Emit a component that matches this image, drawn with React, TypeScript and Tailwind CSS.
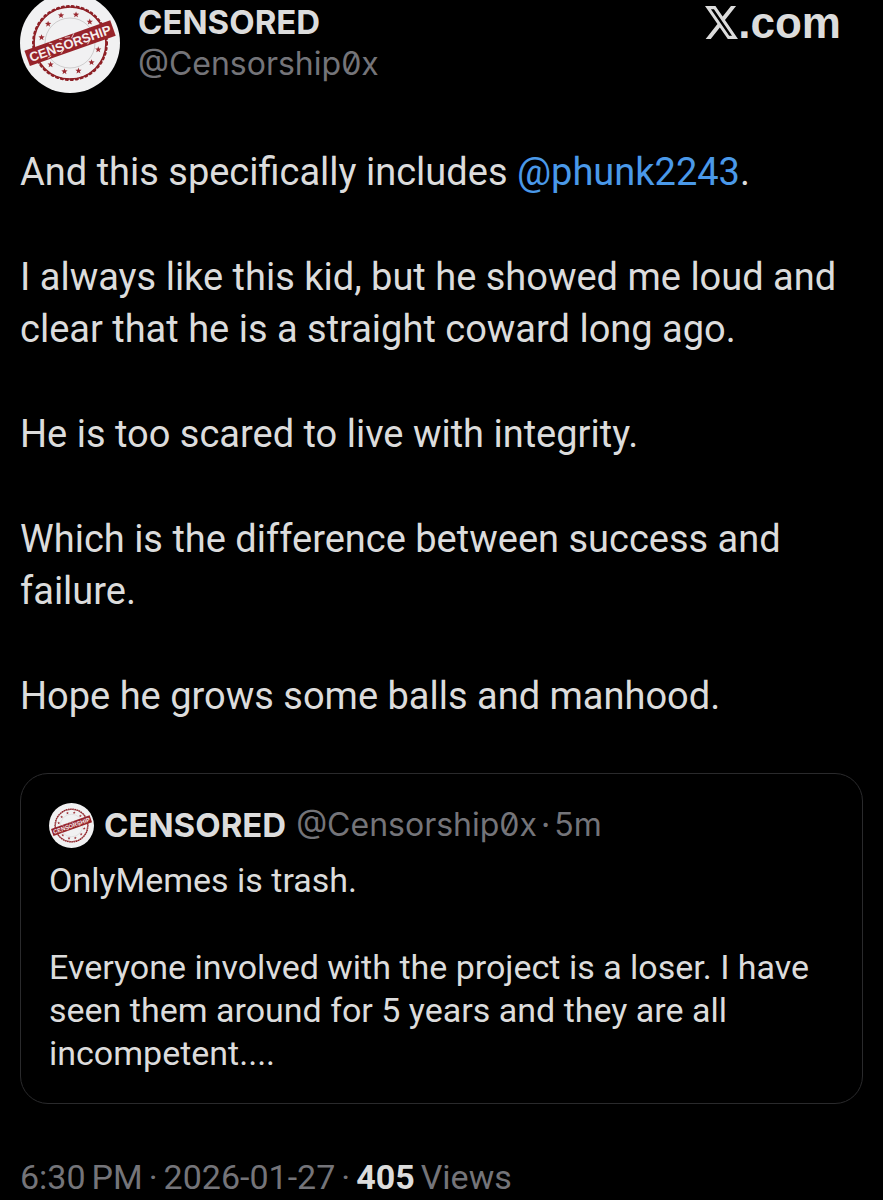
const STAR = "M0 -3.2L0.8 -1.1L3.1 -1L1.3 0.5L2 2.7L0 1.4L-2 2.7L-1.3 0.5L-3.1 -1L-0.8 -1.1Z";
const STAR_ANGLES = [13, 42, 73, 101, 132, 191, 221, 252, 282, 313];

function Avatar({ className }: { className: string }) {
  return (
    <svg viewBox="0 0 100 100" className={className} role="img" aria-label="Censorship stamp">
      <circle cx="50" cy="50" r="50" fill="#f1f1f2" />
      <circle cx="50" cy="50" r="36" fill="none" stroke="#8e2026" strokeWidth="1.6" />
      <circle cx="50" cy="50" r="36.8" fill="none" stroke="#8e2026" strokeWidth="2.4" strokeLinecap="round" strokeDasharray="1.8 3.2" />
      <circle cx="50" cy="50" r="25" fill="none" stroke="#b5b3b4" strokeWidth="0.6" />
      {STAR_ANGLES.map((a) => (
        <path key={a} d={STAR} fill="#9a2a30" transform={`rotate(${a} 50 50) translate(79 50) rotate(${-a})`} />
      ))}
      <g transform="rotate(-19.5 50 50)">
        <rect x="4.5" y="42" width="91" height="16.4" fill="#97232a" />
        <text
          x="50"
          y="55"
          textAnchor="middle"
          fontSize="13"
          fontWeight="700"
          fill="#f6eeee"
          fontFamily="Liberation Sans, sans-serif"
        >
          CENSORSHIP
        </text>
        <path d="M30 43l3 2M38 57l4-3M47 43l5 1M57 42l-4 4M66 57l3-2M24 57l4-1M41 43l3 1" stroke="#eadcdc" strokeWidth="0.8" />
      </g>
    </svg>
  );
}

function XLogo() {
  return (
    <svg viewBox="1.254 2.25 21.573 19.5" preserveAspectRatio="none" className="h-[33px] w-[33px]" fill="currentColor" aria-hidden="true">
      <path d="M18.244 2.25h3.308l-7.227 8.26 8.502 11.24H16.17l-5.214-6.817L4.99 21.75H1.68l7.73-8.835L1.254 2.25H8.08l4.713 6.231zm-1.161 17.52h1.833L7.084 4.126H5.117z" />
    </svg>
  );
}

export default function App() {
  return (
    <main className="min-h-screen bg-black px-5 font-['Roboto',sans-serif] text-[#dcdcdc]">
      <article>
        <header className="flex items-start">
          <Avatar className="-mt-[7px] size-[100px] shrink-0" />
          <div className="ml-[18px] flex-1 pt-0.5">
            <h1 className="font-['Inter',sans-serif] text-[33px] leading-[41px] font-bold">CENSORED</h1>
            <p className="font-['Inter',sans-serif] text-[32px] leading-[41px] text-[#747479] slashed-zero">@Censorship0x</p>
          </div>
          <a href="#home" aria-label="X.com" className="mr-[22px] flex items-end pt-1.5">
            <XLogo />
            <span className="font-['Liberation_Sans',sans-serif] text-[44px] leading-[33px] font-bold">.com</span>
          </a>
        </header>

        <div className="mt-[53px] flex flex-col gap-[53px] text-[38px] leading-[52px]">
          <p>
            And this specifically includes <a href="#phunk2243" className="text-[#4a99e9]">@phunk2243</a>.
          </p>
          <p>I always like this kid, but he showed me loud and clear that he is a straight coward long ago.</p>
          <p>He is too scared to live with integrity.</p>
          <p>Which is the difference between success and failure.</p>
          <p>Hope he grows some balls and manhood.</p>
        </div>

        <section className="mt-[51px] rounded-[28px] border border-[#2a2a2c] px-7 pt-7 pb-7">
          <div className="flex items-center">
            <Avatar className="size-[45px] shrink-0" />
            <h2 className="ml-2.5 font-['Inter',sans-serif] text-[33px] leading-[46px] font-bold">CENSORED</h2>
            <p className="ml-2.5 flex gap-1 font-['Inter',sans-serif] text-[32px] leading-[46px] text-[#747479] slashed-zero">
              <span>@Censorship0x</span>
              <span>·</span>
              <span>5m</span>
            </p>
          </div>
          <div className="mt-[11px] flex flex-col gap-11 text-[34px] leading-[43px]">
            <p>OnlyMemes is trash.</p>
            <p>Everyone involved with the project is a loser. I have seen them around for 5 years and they are all incompetent....</p>
          </div>
        </section>

        <footer className="mt-[51px] flex gap-1.5 text-[34px] leading-[44px] text-[#747479]">
          <time dateTime="2026-01-27T18:30" className="flex gap-1.5">
            <span>6:30</span>
            <span>PM</span>
            <span>·</span>
            <span>2026-01-27</span>
          </time>
          <span>·</span>
          <strong className="font-bold text-[#dcdcdc]">405</strong>
          <span>Views</span>
        </footer>
      </article>
    </main>
  );
}
